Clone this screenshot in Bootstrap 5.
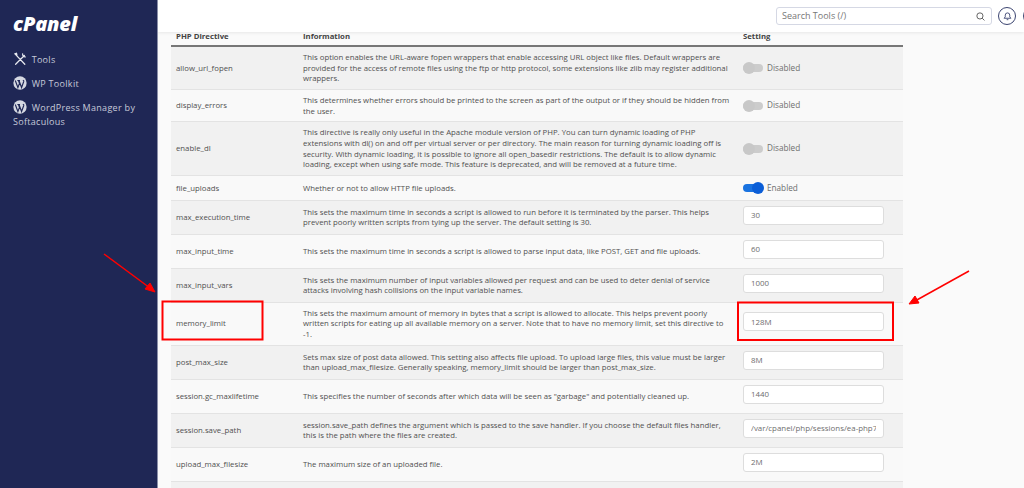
<!doctype html>
<html lang="en">

<head>
  <meta charset="utf-8">
  <meta name="viewport" content="width=device-width, initial-scale=1">
  <title>MultiPHP INI Editor</title>
  <link href="https://cdn.jsdelivr.net/npm/bootstrap@5.3.0/dist/css/bootstrap.min.css" rel="stylesheet">
  <style>
    body {
      height: 488px;
      overflow: hidden;
      background-color: #fafafa;
      font-family: "Open Sans", "Liberation Sans", sans-serif;
      color: #555;
    }

    .side-panel {
      width: 158px;
      flex: none;
      background-color: #1f2755;
      border-right: 1px solid #8a8fa8;
      padding: 15px 13px;
    }

    .side-logo {
      font-size: 20px;
      font-weight: 800;
      font-style: italic;
      line-height: 18px;
      color: #fff;
      letter-spacing: -.2px;
    }

    .side-menu {
      margin-top: 19px;
    }

    .side-menu a {
      display: block;
      color: #c6cad9;
      font-size: 9px;
      line-height: 13.5px;
      letter-spacing: .3px;
      text-decoration: none;
      margin-bottom: 9.5px;
    }

    .side-menu svg {
      vertical-align: -3px;
      margin-right: 2px;
    }

    .top-strip {
      height: 32px;
      background-color: #fff;
      box-shadow: 0 1px 3px rgba(0, 0, 0, .08);
      padding-top: 7px;
      position: relative;
      z-index: 2;
    }

    .search-box {
      width: 216px;
      height: 18px;
      flex: none;
      margin-left: 618px;
      padding: 0 6px 0 5px;
      border: 1px solid #d5d8e4;
      border-radius: 3px;
      font-size: 9px;
      color: #777;
    }

    .bell-ring {
      width: 18px;
      height: 18px;
      margin-left: 6px;
      border: 1px solid #3b4470;
      border-radius: 50%;
      flex: none;
    }

    .edge-ring {
      width: 18px;
      height: 18px;
      margin-left: 7px;
      border: 1px solid #3b4470;
      border-radius: 50%;
      flex: none;
    }

    .ini-wrap {
      width: 732px;
      margin-left: 13px;
    }

    .ini-table {
      table-layout: fixed;
      margin: 0;
      font-size: 7.78px;
      line-height: 10.8px;
      color: #505050;
      --bs-table-bg: transparent;
    }

    .ini-table th {
      font-weight: 700;
      color: #444;
      padding: 0 5px 5px;
      border-bottom: 2px solid #777;
      line-height: 8px;
      padding-top: 0;
    }

    .ini-table td {
      padding: 4.8px 5px;
      vertical-align: middle;
      border-bottom: 1px solid #e3e3e3;
    }

    .ini-table tr:nth-child(odd) td {
      background-color: #f1f1f1;
    }

    .ini-table tr:nth-child(even) td {
      background-color: #f9f9f9;
    }

    .ini-table .first-col {
      width: 132px;
    }

    .ini-table .second-col {
      width: 440px;
    }

    .ini-table th.second-col,
    .ini-table td.second-col {
      padding-left: 0;
      padding-right: 10px;
    }

    .ini-table th.third-col,
    .ini-table td.third-col {
      padding-left: 0;
    }

    .ini-input {
      width: 141px;
      height: 19px;
      margin: 0 0 4.4px;
      padding: 0 7px;
      font-size: 7.9px;
      color: #6e6e6e;
      border: 1px solid #ddd;
      border-radius: 3px;
      background-color: #fff;
    }

    .tog-row {
      gap: 4px;
      font-size: 8.2px;
      color: #6e6e6e;
    }

    .tog-row.tog-tall {
      padding: 1.8px 0;
    }

    .tog-track {
      width: 20px;
      height: 8px;
      border-radius: 4px;
      background-color: #ccc;
      position: relative;
    }

    .tog-track::after {
      content: "";
      position: absolute;
      left: 0;
      top: -2px;
      width: 12px;
      height: 12px;
      border-radius: 50%;
      background-color: #c8c8c8;
    }

    .tog-track.tog-on {
      background-color: #1a73e0;
    }

    .tog-track.tog-on::after {
      left: 9px;
      background-color: #0b5ed7;
    }

    .mark-layer {
      position: absolute;
      left: 0;
      top: 0;
      z-index: 5;
      pointer-events: none;
    }
  </style>
</head>

<body>
  <div class="d-flex">
    <div class="side-panel vh-100">
      <div class="side-logo">cPanel</div>
      <nav class="side-menu">
        <a href="#">
          <svg width="14" height="14" viewBox="0 0 16 16" fill="none" stroke="#e8eaf0" stroke-width="1.4" stroke-linecap="round">
            <path d="M3 14 13 4M11 2.2a3 3 0 0 0 3 3.4M2.5 2.5 13.5 14M2 2l2-.5.5 2" />
          </svg>
          Tools</a>
        <a href="#">
          <svg width="14" height="14" viewBox="0 0 16 16">
            <circle cx="8" cy="8" r="7.6" fill="#d5d8e2" />
            <path d="M2.6 5.2 5.6 13.2 7.4 8.4 6.2 5.2M5 5.2H8M6.8 5.2 9.8 13.2 12.2 6.6C12.6 5.4 11.8 4.6 11.4 5.4" fill="none" stroke="#1f2755" stroke-width="1.3" />
          </svg>
          WP Toolkit</a>
        <a href="#">
          <svg width="14" height="14" viewBox="0 0 16 16">
            <circle cx="8" cy="8" r="7.6" fill="#d5d8e2" />
            <path d="M2.6 5.2 5.6 13.2 7.4 8.4 6.2 5.2M5 5.2H8M6.8 5.2 9.8 13.2 12.2 6.6C12.6 5.4 11.8 4.6 11.4 5.4" fill="none" stroke="#1f2755" stroke-width="1.3" />
          </svg>
          WordPress Manager by Softaculous</a>
      </nav>
    </div>

    <div class="flex-grow-1 overflow-hidden">
      <div class="top-strip d-flex align-items-start">
        <div class="search-box d-flex align-items-center justify-content-between">
          <span>Search Tools (/)</span>
          <svg width="9" height="9" viewBox="0 0 16 16" fill="none" stroke="#555" stroke-width="1.6">
            <circle cx="7" cy="7" r="5.5" />
            <path d="m11 11 4 4" />
          </svg>
        </div>
        <div class="bell-ring d-flex align-items-center justify-content-center">
          <svg width="9" height="10" viewBox="0 0 16 16" fill="none" stroke="#3b4470" stroke-width="1.6">
            <path d="M2 12h12l-2-2.5V6.5a4 4 0 0 0-8 0v3zM6.5 14.5h3" />
          </svg>
        </div>
        <div class="edge-ring"></div>
      </div>

      <div class="ini-wrap">
        <table class="table ini-table">
          <thead>
            <tr>
              <th class="first-col">PHP Directive</th>
              <th class="second-col">Information</th>
              <th class="third-col">Setting</th>
            </tr>
          </thead>
          <tbody>
            <tr>
              <td>allow_url_fopen</td>
              <td class="second-col">This option enables the URL-aware fopen wrappers that enable accessing URL object like files. Default wrappers are provided for the access of remote files using the ftp or http protocol, some extensions like zlib may register additional wrappers.</td>
              <td class="third-col">
                <div class="d-flex align-items-center tog-row"><span class="tog-track"></span>Disabled</div>
              </td>
            </tr>
            <tr>
              <td>display_errors</td>
              <td class="second-col">This determines whether errors should be printed to the screen as part of the output or if they should be hidden from the user.</td>
              <td class="third-col">
                <div class="d-flex align-items-center tog-row"><span class="tog-track"></span>Disabled</div>
              </td>
            </tr>
            <tr>
              <td>enable_dl</td>
              <td class="second-col">This directive is really only useful in the Apache module version of PHP. You can turn dynamic loading of PHP extensions with dl() on and off per virtual server or per directory. The main reason for turning dynamic loading off is security. With dynamic loading, it is possible to ignore all open_basedir restrictions. The default is to allow dynamic loading, except when using safe mode. This feature is deprecated, and will be removed at a future time.</td>
              <td class="third-col">
                <div class="d-flex align-items-center tog-row"><span class="tog-track"></span>Disabled</div>
              </td>
            </tr>
            <tr>
              <td>file_uploads</td>
              <td class="second-col">Whether or not to allow HTTP file uploads.</td>
              <td class="third-col">
                <div class="d-flex align-items-center tog-row tog-tall"><span class="tog-track tog-on"></span>Enabled</div>
              </td>
            </tr>
            <tr>
              <td>max_execution_time</td>
              <td class="second-col">This sets the maximum time in seconds a script is allowed to run before it is terminated by the parser. This helps prevent poorly written scripts from tying up the server. The default setting is 30.</td>
              <td class="third-col"><input class="ini-input d-block" value="30"></td>
            </tr>
            <tr>
              <td>max_input_time</td>
              <td class="second-col">This sets the maximum time in seconds a script is allowed to parse input data, like POST, GET and file uploads.</td>
              <td class="third-col"><input class="ini-input d-block" value="60"></td>
            </tr>
            <tr>
              <td>max_input_vars</td>
              <td class="second-col">This sets the maximum number of input variables allowed per request and can be used to deter denial of service attacks involving hash collisions on the input variable names.</td>
              <td class="third-col"><input class="ini-input d-block" value="1000"></td>
            </tr>
            <tr>
              <td>memory_limit</td>
              <td class="second-col">This sets the maximum amount of memory in bytes that a script is allowed to allocate. This helps prevent poorly written scripts for eating up all available memory on a server. Note that to have no memory limit, set this directive to -1.</td>
              <td class="third-col"><input class="ini-input d-block" value="128M"></td>
            </tr>
            <tr>
              <td>post_max_size</td>
              <td class="second-col">Sets max size of post data allowed. This setting also affects file upload. To upload large files, this value must be larger than upload_max_filesize. Generally speaking, memory_limit should be larger than post_max_size.</td>
              <td class="third-col"><input class="ini-input d-block" value="8M"></td>
            </tr>
            <tr>
              <td>session.gc_maxlifetime</td>
              <td class="second-col">This specifies the number of seconds after which data will be seen as "garbage" and potentially cleaned up.</td>
              <td class="third-col"><input class="ini-input d-block" value="1440"></td>
            </tr>
            <tr>
              <td>session.save_path</td>
              <td class="second-col">session.save_path defines the argument which is passed to the save handler. If you choose the default files handler, this is the path where the files are created.</td>
              <td class="third-col"><input class="ini-input d-block" value="/var/cpanel/php/sessions/ea-php74"></td>
            </tr>
            <tr>
              <td>upload_max_filesize</td>
              <td class="second-col">The maximum size of an uploaded file.</td>
              <td class="third-col"><input class="ini-input d-block" value="2M"></td>
            </tr>
            <tr>
              <td>&nbsp;</td>
              <td class="second-col"></td>
              <td class="third-col"></td>
            </tr>
          </tbody>
        </table>
      </div>
    </div>
  </div>

  <svg class="mark-layer" width="1024" height="488" fill="none" stroke="#f00">
    <rect x="162.5" y="301.5" width="100" height="38" stroke-width="2" />
    <rect x="738" y="302.5" width="155" height="37.5" stroke-width="2" />
    <path d="M104 254 150 288" stroke-width="1.5" />
    <path d="M155 292 145 289 150 283z" fill="#f00" stroke-width="1" />
    <path d="M969 271 915 301" stroke-width="1.5" />
    <path d="M909 304 915 296 919 303z" fill="#f00" stroke-width="1" />
  </svg>

  <script src="https://cdn.jsdelivr.net/npm/bootstrap@5.3.0/dist/js/bootstrap.bundle.min.js"></script>
</body>

</html>
